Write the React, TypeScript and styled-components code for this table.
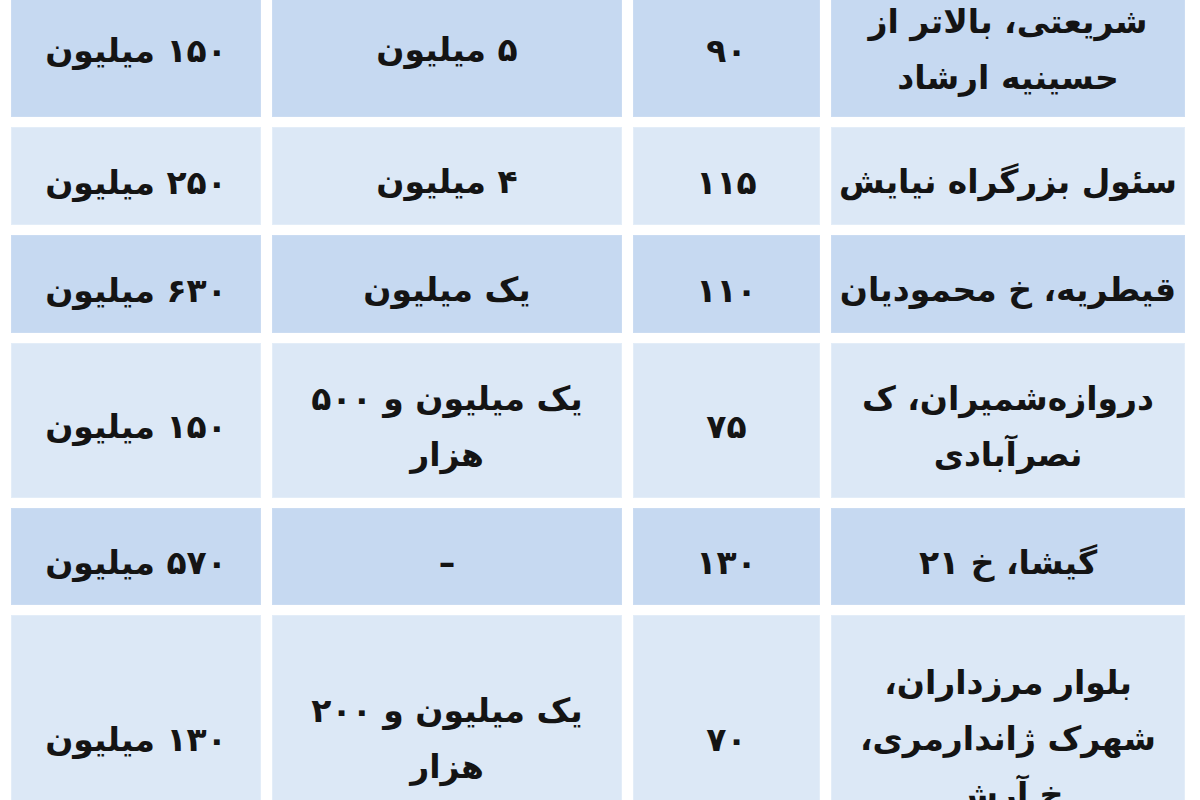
import React from "react"
import styled, { createGlobalStyle } from "styled-components"

type Row = {
  location: string[]
  area: string
  rent: string[]
  deposit: string
  height: number
}

const rows: Row[] = [
  { location: ["شریعتی، بالاتر از", "حسینیه ارشاد"], area: "۹۰", rent: ["۵ میلیون"], deposit: "۱۵۰ میلیون", height: 146 },
  { location: ["سئول بزرگراه نیایش"], area: "۱۱۵", rent: ["۴ میلیون"], deposit: "۲۵۰ میلیون", height: 98 },
  { location: ["قیطریه، خ محمودیان"], area: "۱۱۰", rent: ["یک میلیون"], deposit: "۶۳۰ میلیون", height: 98 },
  { location: ["دروازه‌شمیران، ک", "نصرآبادی"], area: "۷۵", rent: ["یک میلیون و ۵۰۰", "هزار"], deposit: "۱۵۰ میلیون", height: 155 },
  { location: ["گیشا، خ ۲۱"], area: "۱۳۰", rent: ["–"], deposit: "۵۷۰ میلیون", height: 97 },
  { location: ["بلوار مرزداران،", "شهرک ژاندارمری،", "خ آرش"], area: "۷۰", rent: ["یک میلیون و ۲۰۰", "هزار"], deposit: "۱۳۰ میلیون", height: 236 },
]

export default function App() {
  return (
    <>
      <GlobalStyle />
      <Page>
        <Table>
          {rows.map((row, i) => (
            <TableRow key={i} $height={row.height}>
              <Cell $shade={i % 2 === 0}>
                <Lines>{row.location.map((l, j) => <span key={j}>{l}</span>)}</Lines>
              </Cell>
              <Cell $shade={i % 2 === 0}>{row.area}</Cell>
              <Cell $shade={i % 2 === 0}>
                <Lines>{row.rent.map((l, j) => <span key={j}>{l}</span>)}</Lines>
              </Cell>
              <Cell $shade={i % 2 === 0}>{row.deposit}</Cell>
            </TableRow>
          ))}
        </Table>
      </Page>
    </>
  )
}

const GlobalStyle = createGlobalStyle`
  html, body {
    margin: 0;
    padding: 0;
    background: #ffffff;
    overflow: hidden;
  }
`

const Page = styled.div`
  width: 1200px;
  height: 800px;
  overflow: hidden;
  padding-left: 10px;
  box-sizing: border-box;
`

const Table = styled.div`
  width: 1175px;
  margin-top: -29px;
  display: flex;
  flex-direction: column;
  gap: 10px;
  direction: rtl;
  font-family: "DejaVu Sans", sans-serif;
  font-weight: bold;
  font-size: 33px;
  color: #141414;
`

const TableRow = styled.div<{ $height: number }>`
  display: grid;
  grid-template-columns: 354px 187px 350px 250px;
  column-gap: 11px;
  height: ${props => props.$height}px;
`

const Cell = styled.div<{ $shade: boolean }>`
  display: flex;
  align-items: center;
  justify-content: center;
  text-align: center;
  box-sizing: border-box;
  padding-top: 12px;
  background: ${props => (props.$shade ? "#c6d9f1" : "#dce8f6")};
  box-shadow: inset 0 0 0 1px ${props => (props.$shade ? "#cbdcf2" : "#e3edf8")};
`

const Lines = styled.div`
  display: flex;
  flex-direction: column;
  align-items: center;
  line-height: 56px;
`
